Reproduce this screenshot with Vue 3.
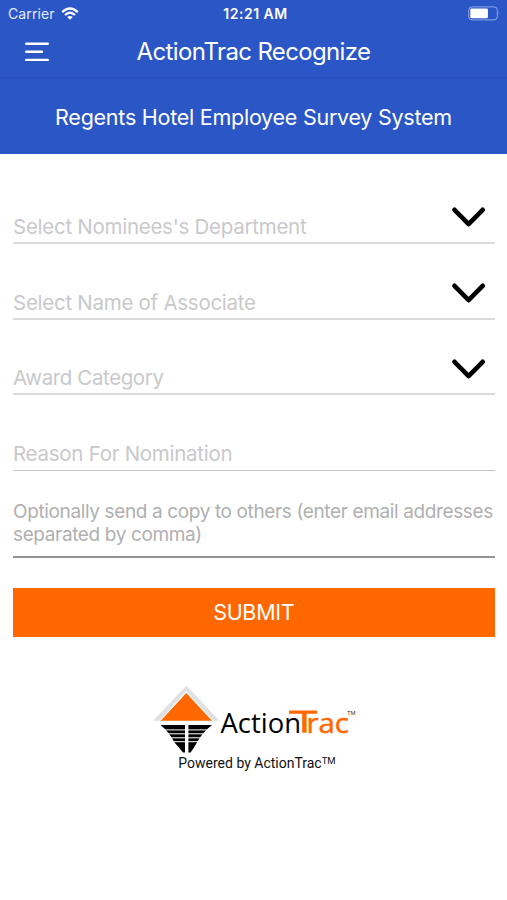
<script setup>
const fields = [
  { label: "Select Nominees's Department", select: true },
  { label: 'Select Name of Associate', select: true },
  { label: 'Award Category', select: true },
  { label: 'Reason For Nomination', select: false }
]
</script>

<template>
  <div class="screen">
    <header class="header">
      <div class="status">
        <div class="carrier">
          <span>Carrier</span>
          <svg class="wifi" width="18" height="14" viewBox="0 0 18 14" fill="none" stroke="#fff" stroke-width="2.3">
            <path d="M1.2 5.1Q9-2 16.8 5.1" />
            <path d="M4 8Q9 3.5 14 8" />
            <path d="M9 12.8L6.2 10Q9 7.9 11.8 10Z" fill="#fff" stroke="none" />
          </svg>
        </div>
        <span class="time">12:21 AM</span>
        <svg class="battery" width="33" height="15" viewBox="0 0 33 15">
          <rect x="0.7" y="0.9" width="28.6" height="13" rx="3.2" fill="none" stroke="#8fa7e4" stroke-width="1" />
          <rect x="2.3" y="2.6" width="17.6" height="9.7" rx="1.2" fill="#fff" />
          <path d="M30.8 5.3Q32.4 7.4 30.8 9.5Z" fill="#8fa7e4" />
        </svg>
      </div>
      <div class="navbar">
        <svg class="menu" width="24" height="20" viewBox="0 0 24 20" stroke="#fff" stroke-width="2.4" stroke-linecap="round">
          <path d="M1.2 1.7H22.8M1.2 9.8H17M1.2 17.9H22.8" />
        </svg>
        <h1 class="title">ActionTrac Recognize</h1>
      </div>
      <div class="banner"><span>Regents Hotel Employee Survey System</span></div>
    </header>

    <main class="form">
      <div v-for="(field, i) in fields" :key="field.label" class="field" :class="'field-' + i">
        <span class="label" :class="'label-' + i">{{ field.label }}</span>
        <svg v-if="field.select" class="chevron" width="34" height="22" viewBox="0 0 34 22" fill="none" stroke="#000" stroke-width="4.6" stroke-linecap="round" stroke-linejoin="round">
          <path d="M2.5 2.8L16.6 17.2L30.7 2.8" />
        </svg>
      </div>
      <div class="copy">
        <div class="copy-first">Optionally send a copy to others (enter email addresses</div>
        <div class="copy-second">separated by comma)</div>
      </div>
      <button class="submit">SUBMIT</button>
    </main>

    <footer class="footer">
      <svg class="logo" width="206" height="70" viewBox="152 685 206 70">
        <path d="M186.3 685.8L219.5 720.8H153Z" fill="#dfe0e2" />
        <path d="M186.3 691L214 721.8H158.6Z" fill="#fff" />
        <path d="M186.3 693L212 720.8H160.6Z" fill="#ff6700" />
        <path d="M160.6 725H212Q203 732 197.8 741Q194 748 190.6 752.5H183Q179.5 748 174.5 742.5Q169 732 160.6 725Z" fill="#000" />
        <path d="M160 729.9H213M160 733.8H213M160 737.8H213M160 741.7H213" stroke="#fff" stroke-width="1" />
        <path d="M186.7 724V753" stroke="#fff" stroke-width="3.4" />
        <text class="word" x="220.5" y="732.7" textLength="80.5" lengthAdjust="spacingAndGlyphs">Action</text>
        <path d="M289 710.6H317V713.8H306.6V732.7H302.2V713.8H289Z" fill="#ff6700" />
        <text class="word orange" x="306.4" y="732.7" textLength="42.4" lengthAdjust="spacingAndGlyphs">rac</text>
        <text class="tm" x="347.3" y="715.3" textLength="8.2" lengthAdjust="spacingAndGlyphs">TM</text>
      </svg>
      <div class="powered">Powered by ActionTrac<span class="mark">TM</span></div>
    </footer>
  </div>
</template>

<style>
body {
  margin: 0;
  background: #fff;
}
</style>

<style scoped>
.screen {
  width: 507px;
  height: 900px;
  overflow: hidden;
  background: #fff;
  font-family: Inter, "Liberation Sans", sans-serif;
}
.header {
  height: 154px;
  background: #2a56c6;
  color: #fff;
}
.status {
  display: grid;
  grid-template-columns: 1fr auto 1fr;
  align-items: center;
  height: 27px;
  padding: 0 6px 0 8px;
  font-size: 14px;
  line-height: 27px;
}
.carrier {
  display: flex;
  align-items: center;
  gap: 6px;
  color: #e3eaff;
  letter-spacing: 0.1px;
}
.time {
  margin-left: 2px;
  font-weight: 600;
  font-size: 14px;
  letter-spacing: 0.5px;
}
.battery {
  justify-self: end;
}
.navbar {
  display: grid;
  grid-template-columns: 112px 1fr 112px;
  align-items: center;
  height: 50px;
  border-bottom: 1px solid #2750bd;
}
.menu {
  margin-left: 25px;
}
.title {
  margin: 0;
  font-size: 24px;
  font-weight: 400;
  line-height: 50px;
  letter-spacing: -0.65px;
  text-align: center;
  white-space: nowrap;
}
.banner {
  height: 76px;
  font-size: 21.5px;
  line-height: 79px;
  letter-spacing: -0.25px;
  text-align: center;
  white-space: nowrap;
}
.form {
  padding: 14px 12.5px 0 13px;
}
.field {
  display: flex;
  justify-content: space-between;
  align-items: flex-end;
  box-sizing: border-box;
  height: 76px;
  border-bottom: 2px solid #dadadc;
  color: #c9c9cc;
}
.field-2 {
  height: 75px;
}
.field-3 {
  border-bottom: 1px solid #c6c6c8;
}
.label {
  font-size: 20.5px;
  line-height: 25px;
  padding-bottom: 3px;
  letter-spacing: -0.27px;
  white-space: nowrap;
}
.label-2 {
  letter-spacing: -0.4px;
}
.label-3 {
  padding-bottom: 4px;
}
.chevron {
  margin: 0 9px 13px 0;
}
.field-2 .chevron {
  margin-bottom: 12.5px;
}
.copy {
  box-sizing: border-box;
  height: 87px;
  padding-top: 29px;
  border-bottom: 2px solid #949494;
  color: #b0b0b0;
  font-size: 19px;
  line-height: 23px;
  letter-spacing: -0.37px;
  white-space: nowrap;
}
.submit {
  display: block;
  width: 100%;
  height: 49px;
  margin-top: 30px;
  padding: 0;
  border: 0;
  background: #ff6700;
  color: #fff;
  font: 400 21.5px/49px Inter, sans-serif;
  letter-spacing: -0.3px;
}
.footer {
  display: flex;
  flex-direction: column;
  align-items: center;
  padding-top: 48px;
}
.logo {
  margin-left: 3px;
}
.word {
  font: 28px "Open Sans", sans-serif;
  fill: #000;
}
.orange {
  fill: #ff6700;
  stroke: #ff6700;
  stroke-width: 0.5;
}
.tm {
  font: 6px "Open Sans", sans-serif;
  fill: #222;
}
.powered {
  margin-left: 7px;
  font: 14px/17px Roboto, sans-serif;
  color: #111;
  white-space: nowrap;
}
.mark {
  font-size: 9.5px;
  vertical-align: 4px;
  line-height: 0;
}
</style>
